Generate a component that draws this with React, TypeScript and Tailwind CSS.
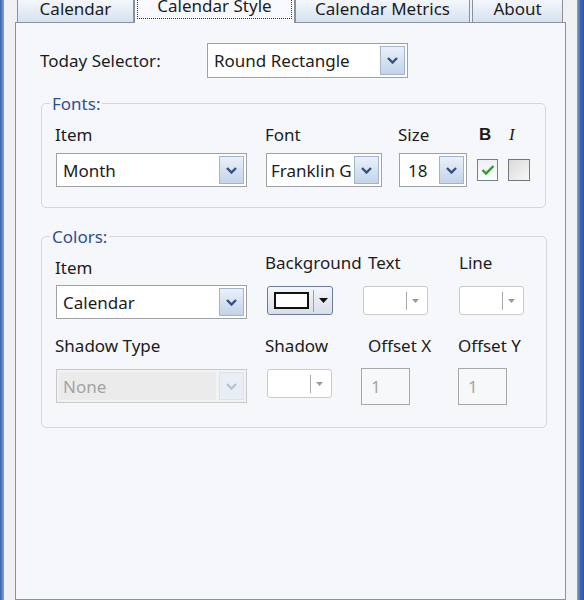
import clsx from "clsx";

const font = "font-['Noto_Sans','DejaVu_Sans',sans-serif] text-[17px] leading-[23px] text-[#1c1c1c]";

// little blue "v" used on every combo box arrow
const Chevron = ({ disabled }: { disabled?: boolean }) => (
    <svg width="11" height="7" viewBox="0 0 11 7">
        <path d="M1 1 L5.5 5.5 L10 1" fill="none" stroke={disabled ? "#b9c3d0" : "#34507f"} strokeWidth="2.4" />
    </svg>
)

interface ICombo {
    text: string
    className: string
    disabled?: boolean
    pad?: string
}

const Combo = ({ text, className, disabled, pad = "pl-[4px]" }: ICombo) => (
    <div className={clsx("flex items-stretch border p-[2px]", disabled ? "border-[#c9c9c9] bg-[#f2f2f2]" : "border-[#9ea1a6] bg-white", className)}>
        <div className={clsx("flex-1 min-w-0 mr-[3px] flex items-center overflow-hidden whitespace-nowrap", pad, disabled ? "bg-[#ebebeb] text-[#a3a3a3]" : "")}>
            {text}
        </div>
        <div className={clsx("w-[25px] shrink-0 flex items-center justify-center border",
            disabled ? "border-[#dde3ea] bg-[#e9eef5]" : "border-[#a4b4cc] bg-linear-to-b from-[#eaf1f9] to-[#c3d3ea]")}>
            <Chevron disabled={disabled} />
        </div>
    </div>
)

const ColorButton = ({ active }: { active?: boolean }) => {
    if (active) {
        return (
            <div className="w-[66px] h-[29px] rounded-[3px] border border-[#6b7a99] bg-linear-to-b from-[#f4f6f9] to-[#d8dee8] flex items-center pl-[6px]">
                <div className="w-[35px] h-[17px] border-2 border-[#111] bg-white" />
                <div className="w-px h-[22px] bg-[#9aa3b3] ml-[4px]" />
                <svg width="9" height="5" viewBox="0 0 9 5" className="ml-[5px]"><path d="M0 0 H9 L4.5 5 Z" fill="#111" /></svg>
            </div>
        )
    }
    return (
        <div className="w-[65px] h-[29px] rounded-[3px] border border-[#cbcbcb] bg-white flex items-center justify-end pr-[8px]">
            <div className="w-px h-[18px] bg-[#a9a9a9]" />
            <svg width="7" height="4" viewBox="0 0 7 4" className="ml-[5px]"><path d="M0 0 H7 L3.5 4 Z" fill="#9a9a9a" /></svg>
        </div>
    )
}

const NumBox = ({ className }: { className: string }) => (
    <div className={clsx("w-[49px] h-[37px] border border-[#a7a7a7] bg-[#f7f8fa] text-[#a5a5a5] flex items-center pl-[9px]", className)}>1</div>
)

const Tab = ({ label, className }: { label: string, className: string }) => (
    <div className={clsx("h-[24px] border border-b-0 border-[#8b9099] bg-linear-to-b from-[#f5f8fc] to-[#d5e2f2] flex justify-center leading-[20px]", className)}>
        {label}
    </div>
)

export default function App() {
    return (
        <div className={clsx("w-[584px] h-[600px] flex overflow-hidden bg-[#eef0f3]", font)}>
            {/* window frame left */}
            <div className="w-[4px] bg-linear-to-r from-[#3960ab] to-[#86a3d8]" />

            <div className="flex-1 flex flex-col px-[11px]">
                {/* Tabs */}
                <div className="h-[22px] flex items-end pl-[2px] shrink-0">
                    <Tab label="Calendar" className="w-[117px]" />
                    <div className="relative z-10 -mb-px w-[161px] h-[29px] border border-b-0 border-[#8b9099] bg-[#f8f9fc] px-[2px] pb-[4px] flex">
                        <div className="flex-1 border border-dotted border-[#333] flex justify-center leading-[20px]">Calendar Style</div>
                    </div>
                    <Tab label="Calendar Metrics" className="w-[175px]" />
                    <Tab label="About" className="w-[91px] ml-[2px]" />
                </div>

                {/* Page */}
                <div className="flex-1 border border-[#8b9099] bg-[#f5f7fb] flex flex-col pt-[20px]">

                    {/* Today selector */}
                    <div className="flex items-center pl-[24px]">
                        <div className="w-[167px]">Today Selector:</div>
                        <Combo text="Round Rectangle" className="w-[201px] h-[35px]" pad="pl-[4px]" />
                    </div>

                    {/* Fonts */}
                    <fieldset className="ml-[25px] mt-[14px] w-[505px] border border-[#d3d6dc] rounded-[5px] pl-[14px] pt-[8px] pb-[20px]">
                        <legend className="-ml-[6px] px-[2px] text-[#2f4f96]">Fonts:</legend>
                        <div className="grid grid-cols-[210px_133px_78px_31px_auto]">
                            <div className="-ml-px">Item</div>
                            <div className="-ml-px">Font</div>
                            <div className="-ml-px">Size</div>
                            <div className="font-bold font-['Liberation_Sans',sans-serif] pl-[2px]">B</div>
                            <div className="italic font-['Liberation_Serif',serif] pl-[1px]">I</div>

                            <Combo text="Month" className="mt-[7px] w-[191px] h-[34px]" />
                            <Combo text="Franklin Gothic Medium" className="mt-[7px] w-[116px] h-[34px]" pad="pl-[2px]" />
                            <Combo text="18" className="mt-[7px] w-[68px] h-[34px]" pad="pl-[6px]" />
                            <div className="mt-[7px] h-[34px] flex items-center">
                                <div className="w-[21px] h-[22px] border border-[#74828f] bg-linear-to-b from-[#eef1f4] to-[#fbfcfd] flex items-center justify-center">
                                    <svg width="14" height="12" viewBox="0 0 14 12">
                                        <path d="M1.5 6 L5 9.5 L12.5 2" fill="none" stroke="#2c9a2c" strokeWidth="2.4" />
                                    </svg>
                                </div>
                            </div>
                            <div className="mt-[7px] h-[34px] flex items-center">
                                <div className="w-[22px] h-[22px] border border-[#767676] bg-linear-to-br from-[#d9d9d9] to-[#f8f8f8]" />
                            </div>
                        </div>
                    </fieldset>

                    {/* Colors */}
                    <fieldset className="ml-[25px] mt-[17px] w-[506px] border border-[#d3d6dc] rounded-[5px] pl-[14px] pt-[3px] pb-[22px]">
                        <legend className="-ml-[6px] px-[2px] text-[#2f4f96]">Colors:</legend>
                        <div className="grid grid-cols-[211px_96px_96px_auto]">
                            <div className="-ml-px pt-[5px]">Item</div>
                            <div className="-ml-[2px]">Background</div>
                            <div className="ml-[5px]">Text</div>
                            <div>Line</div>

                            <Combo text="Calendar" className="mt-[6px] w-[191px] h-[34px]" pad="pl-[4px]" />
                            <div className="mt-[7px]"><ColorButton active /></div>
                            <div className="mt-[7px]"><ColorButton /></div>
                            <div className="mt-[7px]"><ColorButton /></div>

                            <div className="-ml-px mt-[15px]">Shadow Type</div>
                            <div className="-ml-[2px] mt-[15px]">Shadow</div>
                            <div className="ml-[5px] mt-[15px]">Offset X</div>
                            <div className="-ml-px mt-[15px]">Offset Y</div>

                            <Combo text="None" disabled className="mt-[12px] w-[191px] h-[34px]" />
                            <div className="mt-[12px]"><ColorButton /></div>
                            <NumBox className="mt-[11px] -ml-[2px]" />
                            <NumBox className="mt-[11px] -ml-px" />
                        </div>
                    </fieldset>
                </div>
            </div>

            {/* window frame right */}
            <div className="w-[7px] bg-linear-to-r from-[#86a3d8] via-[#4068b2] to-[#2f56a0]" />
        </div>
    )
}
